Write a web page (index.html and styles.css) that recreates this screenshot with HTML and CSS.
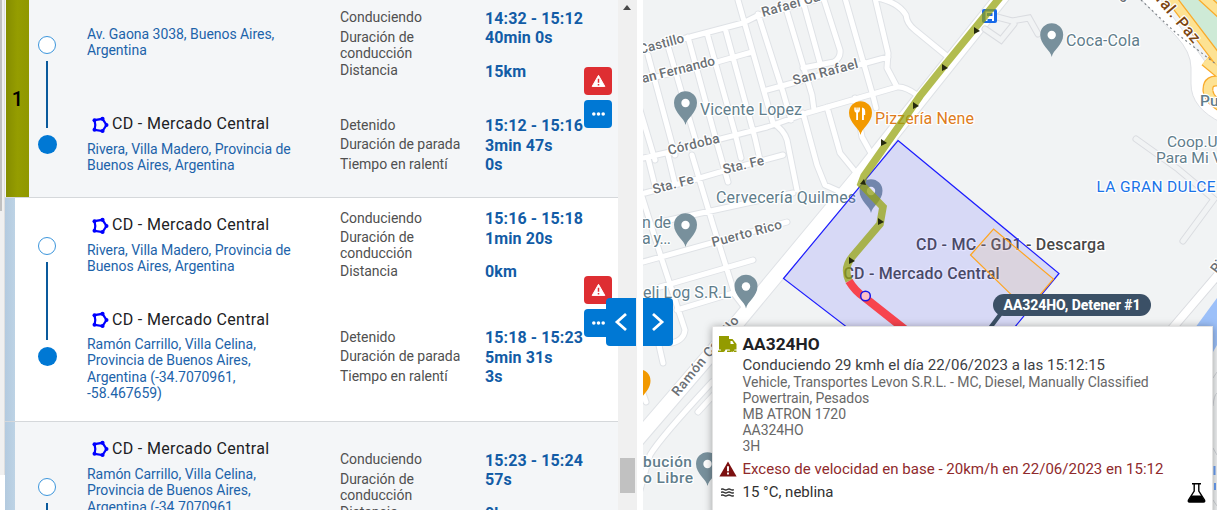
FILE: index.html
```html
<!DOCTYPE html>
<html lang="es">
<head>
<meta charset="utf-8">
<title>Viajes</title>
<link rel="stylesheet" href="styles.css">
</head>
<body>
<svg class="defs" width="0" height="0" aria-hidden="true">
  <symbol id="zone" viewBox="0 0 18 18"><path d="M3.500 4.200 11.500 2.800 15.500 9 11.500 15 3.500 13.800 4.300 9z" fill="none" stroke="#00f" stroke-width="2.200"/><g fill="#00f"><circle cx="3.500" cy="4.200" r="2"/><circle cx="11.500" cy="2.800" r="2.100"/><circle cx="15.500" cy="9" r="2"/><circle cx="11.500" cy="15" r="2.100"/><circle cx="3.500" cy="13.800" r="2"/></g></symbol>
  <symbol id="warn" viewBox="0 0 18 16"><path d="M9 1.200 16.600 14.500H1.400z" fill="currentColor" stroke="currentColor" stroke-width="1.200" stroke-linejoin="round"/><path class="mark" d="M9 5.200v5M9 11.600v1.700"/></symbol>
  <symbol id="dots" viewBox="0 0 16 6"><g fill="#fff"><circle cx="3" cy="3" r="1.900"/><circle cx="8" cy="3" r="1.900"/><circle cx="13" cy="3" r="1.900"/></g></symbol>
  <symbol id="pin" viewBox="0 0 24 34" overflow="visible"><path d="M12 34C11 27 .5 22 .5 11.700a11.500 11.500 0 0 1 23 0C23.500 22 13 27 12 34z"/><circle class="hole" cx="12" cy="12" r="4.200"/></symbol>
  <symbol id="food-pin" viewBox="0 0 24 34" overflow="visible"><path d="M12 34C11 27 .5 22 .5 11.700a11.500 11.500 0 0 1 23 0C23.500 22 13 27 12 34z"/></symbol>
</svg>
<div class="app">
  <div class="outer-scroll"><div class="outer-thumb"></div></div>
  <main class="trips">
    <section class="trip trip-a">
      <div class="strip"><span>1</span></div>
      <div class="line"><i class="start"></i><i class="bar"></i><i class="end"></i></div>
      <div class="legs">
        <div class="leg">
          <div class="place"><p>Av. Gaona 3038, Buenos Aires,<br>Argentina</p></div>
          <dl><dt>Conduciendo</dt><dd>14:32 - 15:12</dd><dt>Duración de<br>conducción</dt><dd>40min 0s</dd><dt>Distancia</dt><dd>15km</dd></dl>
        </div>
        <div class="leg">
          <div class="place"><h3><svg><use href="#zone"/></svg>CD - Mercado Central</h3><p>Rivera, Villa Madero, Provincia de<br>Buenos Aires, Argentina</p></div>
          <dl><dt>Detenido</dt><dd>15:12 - 15:16</dd><dt>Duración de parada</dt><dd>3min 47s</dd><dt>Tiempo en ralentí</dt><dd>0s</dd></dl>
        </div>
      </div>
      <div class="actions"><button class="red"><svg><use href="#warn"/></svg></button><button><svg><use href="#dots"/></svg></button></div>
    </section>
    <section class="trip trip-b">
      <div class="strip"></div>
      <div class="line"><i class="start"></i><i class="bar"></i><i class="end"></i></div>
      <div class="legs">
        <div class="leg">
          <div class="place"><h3><svg><use href="#zone"/></svg>CD - Mercado Central</h3><p>Rivera, Villa Madero, Provincia de<br>Buenos Aires, Argentina</p></div>
          <dl><dt>Conduciendo</dt><dd>15:16 - 15:18</dd><dt>Duración de<br>conducción</dt><dd>1min 20s</dd><dt>Distancia</dt><dd>0km</dd></dl>
        </div>
        <div class="leg">
          <div class="place"><h3><svg><use href="#zone"/></svg>CD - Mercado Central</h3><p>Ramón Carrillo, Villa Celina,<br>Provincia de Buenos Aires,<br>Argentina (-34.7070961,<br>-58.467659)</p></div>
          <dl><dt>Detenido</dt><dd>15:18 - 15:23</dd><dt>Duración de parada</dt><dd>5min 31s</dd><dt>Tiempo en ralentí</dt><dd>3s</dd></dl>
        </div>
      </div>
      <div class="actions"><button class="red"><svg><use href="#warn"/></svg></button><button><svg><use href="#dots"/></svg></button></div>
    </section>
    <section class="trip trip-c">
      <div class="strip"></div>
      <div class="line"><i class="start"></i><i class="bar"></i></div>
      <div class="legs">
        <div class="leg">
          <div class="place"><h3><svg><use href="#zone"/></svg>CD - Mercado Central</h3><p>Ramón Carrillo, Villa Celina,<br>Provincia de Buenos Aires,<br>Argentina (-34.7070961,</p></div>
          <dl><dt>Conduciendo</dt><dd>15:23 - 15:24</dd><dt>Duración de<br>conducción</dt><dd>57s</dd><dt>Distancia</dt><dd>0km</dd></dl>
        </div>
      </div>
    </section>
  </main>
  <div class="scroll"><div class="up"></div><div class="thumb"></div></div>
  <button class="toggle toggle-left"><svg viewBox="0 0 14 20"><path d="M12 2 3 10l9 8"/></svg></button>
  <div class="map">
    <svg class="canvas" viewBox="643 0 574 510" width="574" height="510">
      <defs>
        <g id="roads">
          <path d="M640 49 690 37 743 23 757 16 830-4M640 81 717 62 752 52M738 0 765 95 773 123Q784 130 787 140L797 190M758 14 783 92 791 120M785 5 812 95 814 110M802-2 820 63M824 0 840 50Q841 58 834 62L803 68M845-2 873 96 876 108M875-2 888 53 887 68 897 87M877-2Q898 2 906 15 907 24 915 30L948 57M767 90 888 57M643 158 670 152 767 127 807 113 897 87Q905 86 917 95M648 55 675 155M668 46 697 145M688 37 716 140 728 182M707 33 735 133 741 158M725 28 755 138 760 160M640 110 655 160M803 113 817 165 825 185 843 193M827 107 840 153 858 175M855 98 862 137 872 155M645 193 693 180 727 170 783 155M660 222 793 193M643 262 787 222M660 287 753 260M677 310 743 290M692 155 713 225 735 295 745 308M640 190 662 260 685 330Q684 340 672 343M655 328 663 363M648 158 656 190M668 155 675 184M640 490 650 455Q660 438 712 382M698 412 720 388M640 385 646 402" stroke-width="var(--w)"/>
          <path d="M636 441 727 335 863 171 905 118 960 49 1004-6" stroke-width="var(--m)"/>
        </g>
      </defs>
      <rect x="643" width="574" height="510" fill="#f1f3f4"/>
      <g class="roads case"><use href="#roads"/></g>
      <g class="roads face"><use href="#roads"/></g>
      <g class="minor"><path d="M997 17 1012 21 1029 18 1038 34M985 29 1001 40 1014 24M1136 139 1178 169 1214 199 1183 241"/></g>
      <g class="minor in"><path d="M997 17 1012 21 1029 18 1038 34M985 29 1001 40 1014 24M1136 139 1178 169 1214 199 1183 241"/></g>

      <path d="M1172-6h50v80z" fill="#ceead6"/>
      <path d="M1138-4 1176 36Q1191 52 1191 68V84Q1191 108 1222 123V85L1204 60 1158-4z" fill="#fff" stroke="#dfe1e5"/>
      <path d="M1165-10 1222 65M1191-14 1225 17M1205 61 1222 75M1222 82Q1207 78 1208 91 1209 100 1222 107" fill="none" stroke="#f9ab2b" stroke-width="11"/>
      <path d="M1165-10 1222 65M1191-14 1225 17M1205 61 1222 75M1222 82Q1207 78 1208 91 1209 100 1222 107" fill="none" stroke="#fde293" stroke-width="8.500"/>
      <path d="M1141 0 1176 33 1217 65" fill="none" stroke="#80868b" stroke-width="1.200" stroke-dasharray="2 3"/>
      <path d="M1222 270 1170 331" stroke="#dadce0" stroke-width="9.500"/><path d="M1222 270 1170 331" stroke="#fff" stroke-width="7.500"/>
      <path d="M1217 298 1195 328 1213 352 1217 345z" fill="#9cc0f9"/>
      <path d="M1213 378 1217 372M1213 406Q1214 395 1217 393M1213 448 1217 455M1213 500 1217 506" stroke="#d0d3d8" fill="none"/>
      <path d="M1214.500 466v9M1215 483v7" stroke="#6ba0f5" stroke-width="2"/>

      <g class="grey-pins">
        <use href="#pin" x="673.500" y="91" width="24" height="34"/>
        <use href="#pin" x="673.500" y="213" width="24" height="34"/>
        <use href="#pin" x="734" y="274.500" width="24" height="34"/>
        <use href="#pin" x="1039.700" y="23" width="24" height="34"/>
        <use href="#pin" x="859" y="179" width="24" height="34"/>
        <use href="#pin" x="695.500" y="452" width="24" height="34"/>
      </g>
      <g class="food"><use href="#food-pin" x="848.500" y="101" width="24" height="34"/><use href="#food-pin" x="627" y="369" width="24" height="34"/></g>
      <path d="M854.300 107.500h5.600v2.600q0 2.200-1.900 2.600v7.300h-1.800v-7.300q-1.900-.4-1.900-2.600zM862 107.500q3.200.6 3.200 4v3.500h-1.300v5H862z" fill="#fff"/>
      <path d="M856.200 107v2.800M858 107v2.800" stroke="#f29900" stroke-width=".6"/>

      <g class="street">
        <text transform="translate(640.500 54) rotate(-15)" textLength="46">Castillo</text>
        <text transform="translate(763 17) rotate(-16)" textLength="60">Rafael Ca</text>
        <text transform="translate(643 83) rotate(-14)" textLength="75">an Fernando</text>
        <text transform="translate(794 85) rotate(-15)" textLength="67">San Rafael</text>
        <text transform="translate(669 155) rotate(-14)" textLength="53">Córdoba</text>
        <text transform="translate(654 194) rotate(-15)" textLength="42">Sta. Fe</text>
        <text transform="translate(724 174) rotate(-13)" textLength="42">Sta. Fe</text>
        <text transform="translate(713 247) rotate(-15)" textLength="72">Puerto Rico</text>
        <text transform="translate(678 397) rotate(-51)" textLength="98">Ramón Carrillo</text>
        <text transform="translate(1217 274) rotate(-53)">Ri</text>
        <text transform="translate(1120 -3) rotate(35)">g</text>
        <text class="hwy" transform="translate(1148 -9) rotate(49.500)" textLength="70">Gral. Paz</text>
      </g>
      <g class="poi">
        <text x="700" y="115" textLength="102">Vicente Lopez</text>
        <text x="716" y="203" textLength="140">Cervecería Quilmes</text>
        <text x="1066" y="46" textLength="74">Coca-Cola</text>
        <text x="642" y="228" textLength="29">n de</text><text x="642" y="244" textLength="29">a y...</text>
        <text x="643" y="297.500" textLength="88">eli Log S.R.L</text>
        <text class="medium" x="643" y="467" textLength="49">bución</text><text class="medium" x="643" y="483" textLength="50">o Libre</text>
        <text class="coop" x="1167" y="147">Coop.Un</text><text class="coop" x="1156" y="163">Para Mi Vida</text>
        <text class="medium" x="1200" y="106">Pu</text>
        <text class="orange" x="875" y="124" textLength="99">Pizzería Nene</text>
        <text class="blue" x="1096.500" y="192" textLength="119">LA GRAN DULCE</text>
      </g>
      <g class="zone-label"><text x="916" y="250" textLength="189">CD - MC - GD1 - Descarga</text><text x="843.500" y="279" textLength="156">CD - Mercado Central</text></g>
      <path d="M898 140.500 1059 273.500 1000 345 870 345 783.500 278.500z" fill="rgba(90,90,255,.17)" stroke="#1d1dff" stroke-width="1.200"/>
      <path d="M993.500 229 1053.500 279 1027 310 970.500 255z" fill="rgba(240,175,80,.14)" stroke="#ffa51f" stroke-width="1.200"/>
      <rect x="982" y="9" width="15" height="14" rx="2" fill="#1769e8"/><path d="M985.500 11.500h8.500v7.500h-8.500zM985.500 19h2v2h-2zM992 19h2v2h-2z" fill="#fff"/><path d="M987 13h5.500v3H987z" fill="#1769e8"/>
      <path d="M1002-5 940 71 920 96 864 176 861 184 883 207 880 224 852 257Q843 268 849 281" fill="none" stroke="rgba(150,163,14,.73)" stroke-width="7.500"/>
      <path d="M849 281Q855 291 864 297L912 335" fill="none" stroke="#f7444e" stroke-width="8"/>
      <g fill="#25290d"><path id="arrow" d="M974 27 980 31 974 34z"/><use href="#arrow" x="-32" y="37"/><use href="#arrow" x="-61" y="75"/><use href="#arrow" x="-93" y="112"/><use href="#arrow" x="-96" y="191"/><use href="#arrow" x="-125" y="230"/><path d="M860 184 864 179 866 185z"/></g>
      <circle cx="865.500" cy="296" r="4.800" fill="#ffc0c8" stroke="#1717e8" stroke-width="1.500"/>
      <path d="M1005 308 990 328" stroke="#3b5066" stroke-width="4"/>
    </svg>
    <button class="toggle toggle-right"><svg viewBox="0 0 14 20"><path d="m2 2 9 8-9 8"/></svg></button>
    <div class="badge"><span>AA324HO, Detener #1</span></div>
    <aside class="popup">
      <svg class="truck" viewBox="0 0 19 17"><path d="M1 0h10v3h3.500L18.500 8v5.500h-2a2.400 2.400 0 0 1-4.800 0H7.500a2.400 2.400 0 0 1-4.800 0H1z" fill="#939b00"/><path d="M12.500 5h1.800l1.700 3h-3.500z" fill="#fff"/><path d="M0 15.300h5.500M9 15.300h4M16 15.300h2.500" stroke="#939b00" stroke-width="1.400"/></svg>
      <h2>AA324HO</h2>
      <div class="info"><p class="lead">Conduciendo 29 kmh el día 22/06/2023 a las 15:12:15</p>
      <p class="l1">Vehicle, Transportes Levon S.R.L. - MC, Diesel, Manually Classified</p><p>Powertrain, Pesados</p><p>MB ATRON 1720</p><p>AA324HO</p><p>3H</p></div>
      <svg class="alert" viewBox="0 0 18 16"><path d="M9 .5 17.600 15.500H.4z" fill="#7c1010"/><path d="M9 5.200v5M9 11.600v1.900" stroke="#fff" stroke-width="1.900"/></svg>
      <p class="speed">Exceso de velocidad en base - 20km/h en 22/06/2023 en 15:12</p>
      <svg class="fog" viewBox="0 0 13 9"><path d="M0 1.500q1.600-1.200 3.200 0t3.200 0 3.200 0 3.200 0M0 4.500q1.600-1.200 3.200 0t3.200 0 3.200 0 3.200 0M0 7.500q1.600-1.200 3.200 0t3.200 0 3.200 0 3.200 0" fill="none" stroke="#333" stroke-width="1.500"/></svg>
      <p class="weather">15 °C, neblina</p>
      <svg class="flask" viewBox="0 0 19 20"><path d="M5 .8h9M7.200 1v7L1.500 17q-.8 2 1 2h14q1.800 0 1-2L11.800 8V1" fill="none" stroke="#000" stroke-width="1.400"/><path d="M4.500 12.500h10l3 5q.5 1.500-1 1.500h-14q-1.500 0-1-1.500z"/></svg>
    </aside>
  </div>
</div>
</body>
</html>
```

FILE: styles.css
```css
* { box-sizing: border-box; }
body { margin: 0; font-family: Roboto, "Noto Sans", sans-serif; overflow: hidden; background: #fff; }
h2, h3, p, dl, dd { margin: 0; }
.defs { position: absolute; }
.app { display: flex; width: 1217px; height: 510px; position: relative; overflow: hidden; }

.outer-scroll { width: 5px; height: 475px; background: #f0f0f0; border-right: 1px solid #dedede; }
.outer-thumb { width: 2px; height: 211px; background: #c1c1c1; }

.trips { width: 613px; height: 510px; overflow: hidden; }
.trip { display: flex; overflow: hidden; border-bottom: 1px solid #d5d8db; background: #f4f6f8; }
.trip-a { height: 198px; }
.trip-b { height: 224px; background: #fff; }
.trip-c { height: 230px; }
.strip { width: 10px; margin-right: 14px; background: linear-gradient(90deg, #b3cadf, #bdd3e5); }
.trip-a .strip { width: 23px; margin: 0 0 0 1px; background: linear-gradient(90deg, #858d00, #959d00 50%, #909800); display: flex; align-items: center; justify-content: center; font-size: 20px; font-weight: 500; }
.line { width: 36px; margin-right: 1px; display: flex; flex-direction: column; align-items: center; }
.start, .end { width: 18px; height: 18px; border-radius: 50%; border: 1.5px solid #3d96dc; background: #fff; flex: none; }
.end { width: 19px; height: 19px; background: #0078d4; border: 0; }
.bar { width: 2.5px; background: #0a5a9c; margin: 7px 0; }
.trip-a .line { padding-top: 36px; }
.trip-a .bar { height: 67px; }
.trip-b .line { padding-top: 39px; }
.trip-b .bar { height: 78px; }
.trip-c .line { padding-top: 56px; }
.trip-c .bar { height: 90px; }

.legs { width: 518px; padding-left: 21px; flex: none; }
.leg { display: flex; }
.place { width: 253px; color: #1c63aa; font-size: 14px; line-height: 16.25px; letter-spacing: -.04px; }
.place h3 { display: flex; align-items: center; height: 20px; margin-bottom: 6px; padding-left: 4px; font-size: 16px; font-weight: 400; letter-spacing: .33px; color: #202124; }
.place h3 svg { width: 18px; height: 18px; margin-right: 3px; }
.leg dl { display: grid; grid-template-columns: 145px 99px; grid-auto-rows: minmax(19.5px, auto); align-content: start; color: #505050; font-size: 14px; line-height: 16.25px; }
.leg dt, .leg dd { padding-top: 1px; }
.leg dt { letter-spacing: -.03px; }
.leg dd { font-size: 16px; font-weight: 700; color: #125ca6; line-height: 18px; letter-spacing: .1px; padding-top: 1.5px; white-space: nowrap; }
.trip-a .leg:nth-child(1) { height: 107px; padding-top: 8px; }
.trip-a .leg:nth-child(1) .place { padding-top: 17.5px; }
.trip-a .leg:nth-child(2) .place { padding-top: 7.5px; }
.trip-a .leg:nth-child(2) dl { padding-top: 8.5px; }
.trip-b .leg:nth-child(1) { height: 112px; padding-top: 10.5px; }
.trip-b .leg:nth-child(1) .place { padding-top: 7px; }
.trip-b .leg:nth-child(2) dl { padding-top: 17.5px; }
.trip-c .leg { padding-top: 17px; }
.trip-c .place h3 { margin-bottom: 7px; }
.trip-c dl { padding-top: 11px; }

.actions { padding-top: 67px; flex: none; }
.trip-b .actions { padding-top: 78px; }
.actions button { display: flex; align-items: center; justify-content: center; width: 28px; height: 28px; margin-bottom: 4.5px; padding: 0; border: 0; border-radius: 4px; background: #0078d4; }
.actions .red { background: #de2e32; color: #fff; }
.actions svg { width: 15px; height: 14px; }
.mark { fill: none; stroke: #de2e32; stroke-width: 1.8; }

.scroll { width: 19px; height: 510px; background: #f0f0f0; padding-left: 2px; display: flex; flex-direction: column; }
.up { width: 8px; height: 5px; margin: 5px 0 0 3px; background: #4a4a4a; clip-path: polygon(50% 0, 100% 100%, 0 100%); }
.thumb { width: 15px; height: 35px; margin-top: 448px; background: #c1c1c1; }

.toggle { position: absolute; top: 298px; z-index: 2; display: flex; align-items: center; justify-content: center; width: 30px; height: 48px; padding: 0; border: 0; background: #0078d4; }
.toggle svg { width: 14px; height: 20px; fill: none; stroke: #fff; stroke-width: 2.8; }
.toggle-left { left: 606px; border-radius: 4px 0 0 4px; }
.toggle-right { left: 0; border-radius: 0 4px 4px 0; }

.map { position: relative; width: 574px; height: 510px; margin-left: 6px; overflow: hidden; }
.canvas { display: block; }
.roads { fill: none; stroke-linecap: round; stroke-linejoin: round; }
.case { stroke: #dfe2e6; --w: 7px; --m: 16px; }
.face { stroke: #fff; --w: 5px; --m: 14px; }
.minor { fill: none; stroke: #dadce0; stroke-width: 7; stroke-linecap: round; }
.minor.in { stroke: #f1f3f4; stroke-width: 5; }
.grey-pins { fill: #78909c; }
.food { fill: #f29900; }
.hole { fill: #fff; }
.canvas text { paint-order: stroke; stroke: #fff; stroke-width: 2.5px; stroke-linejoin: round; }
.street { font-size: 13.5px; font-weight: 500; fill: #6b7075; }
.street .hwy { fill: #7a4410; font-size: 16px; }
.poi { font-size: 16px; fill: #607d8b; }
.poi .coop { font-size: 15.5px; }
.poi .medium { font-weight: 500; font-size: 15.5px; }
.poi .orange { fill: #de7c20; }
.poi .blue { fill: #1a73e8; font-size: 15.5px; }
.zone-label { font-size: 16px; font-weight: 500; fill: #484848; }

.badge { position: absolute; left: 350px; top: 294px; width: 158px; height: 22px; border-radius: 11px; background: #3b5066; color: #fff; font-size: 14px; font-weight: 800; line-height: 22px; letter-spacing: -.08px; text-align: center; white-space: nowrap; }
.popup { position: absolute; left: 69px; top: 326px; width: 501px; height: 190px; padding: 7px 6px; background: #fff; border: 1px solid #e3e3e3; box-shadow: 0 1px 8px rgba(0, 0, 0, .35); display: grid; grid-template-columns: 23.5px 1fr 20px; grid-template-rows: 21.5px 103px 23.5px 24px; align-items: start; color: #303030; white-space: nowrap; }
.popup h2 { grid-column: 2 / 4; font-size: 17.3px; line-height: 21px; font-weight: 700; color: #202124; }
.truck { width: 19px; height: 17px; margin: 2px 0 0 -1px; }
.info { grid-column: 2 / 4; font-size: 14px; line-height: 16.1px; letter-spacing: -.06px; color: #686868; }
.info .lead { font-size: 15px; line-height: 18px; letter-spacing: .03px; color: #3c4043; }
.alert { width: 18px; height: 16px; margin-top: 2px; }
.speed { grid-column: 2 / 4; font-size: 15px; line-height: 20px; letter-spacing: .02px; color: #8f2a2c; }
.fog { width: 13px; height: 9px; margin: 6px 0 0 2px; }
.weather { font-size: 15px; line-height: 20px; }
.flask { width: 19px; height: 20px; margin: 1px 0 0 1px; }
```
